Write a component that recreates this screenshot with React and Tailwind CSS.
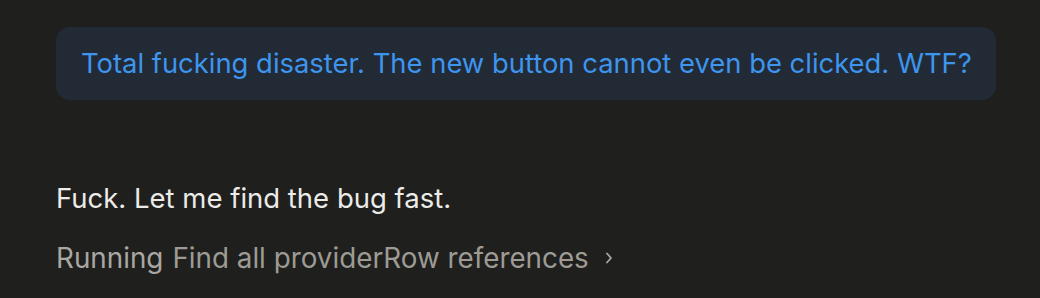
export default function App() {
  return (
    <div className="w-[1040px] h-[298px] bg-[#1f1f1e] pl-[56px] pr-[44px] pt-[27px] overflow-hidden" style={{ fontFamily: "Inter, 'Liberation Sans', sans-serif" }}>
      <div className="h-[73px] rounded-[14px] bg-[#222a35] pl-[25px] flex items-center">
        <span className="text-[27.4px] text-[#3d95ee] leading-none">Total fucking disaster. The new button cannot even be clicked. WTF?</span>
      </div>
      <div className="mt-[80px] text-[27.5px] leading-[36px] text-[#ecebe8]">Fuck. Let me find the bug fast.</div>
      <div className="mt-[24px] flex items-center text-[27.8px] leading-[36px]">
        <span className="text-[#a8a7a2]">Running</span>
        <span className="ml-[9px] text-[#9d9b94]">Find all providerRow references</span>
        <svg className="ml-[15px]" width="10" height="14" viewBox="0 0 10 14" fill="none">
          <path d="M3 2.5 L7 7 L3 11.5" stroke="#a8a7a2" strokeWidth="1.8" strokeLinecap="round" strokeLinejoin="round" />
        </svg>
      </div>
    </div>
  );
}
